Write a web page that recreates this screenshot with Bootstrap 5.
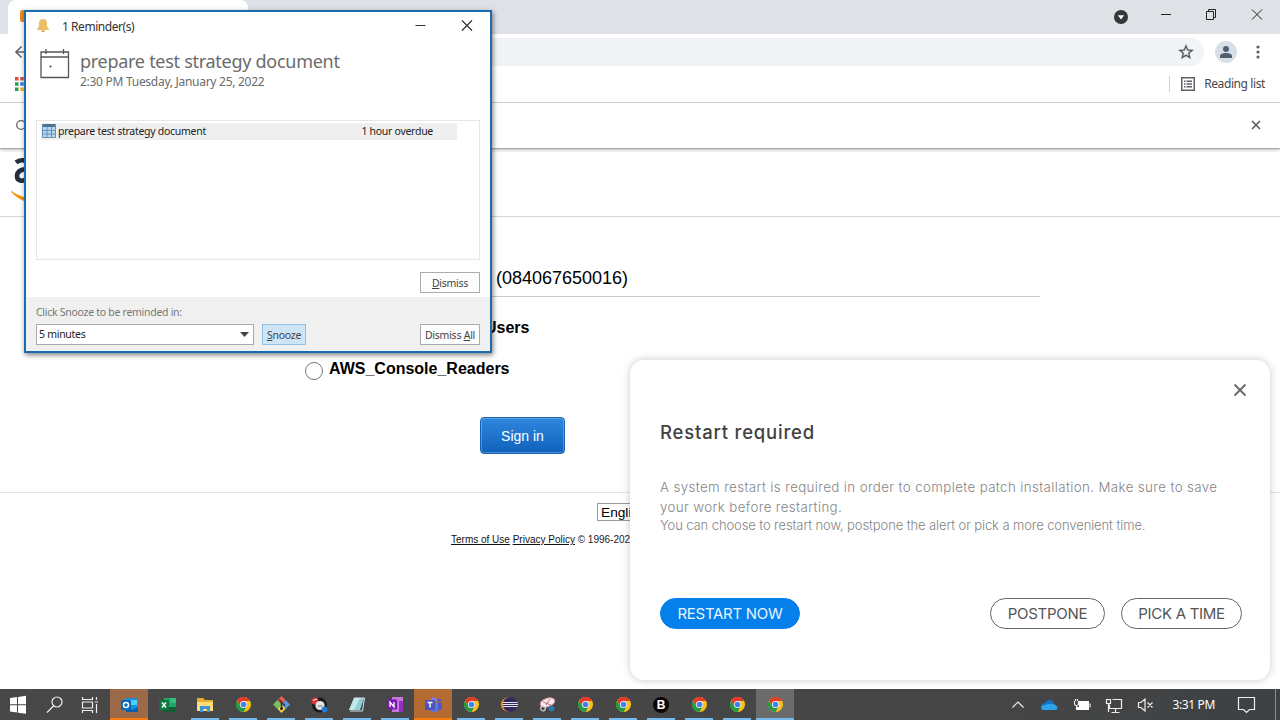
<!DOCTYPE html>
<html lang="en">
<head>
<meta charset="utf-8">
<meta name="viewport" content="width=device-width, initial-scale=1">
<title>Desktop</title>
<link href="https://cdn.jsdelivr.net/npm/bootstrap@5.3.0/dist/css/bootstrap.min.css" rel="stylesheet">
<style>
body{font-family:"Liberation Sans",Arial,sans-serif;color:#000;background:#fff;overflow:hidden}
svg{display:block;flex:none}
.desktop{width:1280px;height:720px}
.segoe{font-family:"Noto Sans","Open Sans",sans-serif}
.tabstrip{height:34px;background:#dee1e6;padding-left:8px}
.tab{width:240px;border-radius:8px 8px 0 0;background:#fff;padding:10px 12px}
.winctl{padding-right:16px}
.toolbar{height:34px;padding:4px 14px 2px 14px}
.omni{height:28px;margin-left:30px;background:#f1f3f4;border-radius:0 14px 14px 0;padding-right:9px}
.avatar{width:22px;height:22px;background:#d9dfe7;margin:0 19px 0 11px}
.menu-dots{margin-right:6px}
.bookmarks{height:35px;border-bottom:1px solid #d3d3d5;padding:0 15px 2px}
.reading{font-size:12px;color:#46484c;letter-spacing:-.4px}
.vr-line{width:1px;height:16px;background:#d2d4d8}
.infobar{height:46px;border-bottom:1px solid #a9a9a9;box-shadow:0 1px 3px rgba(0,0,0,.28);padding:0 19px 1px 16px}
.aws-head{height:68px;border-bottom:1px solid #d5d5d5;padding:3px 0 0 10px}
.aws-form{width:800px;margin-left:240px;padding-top:50px}
.account{height:30px;border-bottom:1px solid #ccc;font-size:18px;line-height:22px;padding-left:256px}
.role{font-size:16px;font-weight:700;line-height:20px}
.role-a{margin:21px 0 0 245px}
.role-b{margin:20px 0 0 65px}
.radio-dot{width:18px;height:18px;border:1px solid #767676;border-radius:50%;background:#fff;margin:4px 6px 0 0}
.signin{width:85px;height:37px;font-size:14px;line-height:36px;color:#fff;border:1px solid #1562b2;border-radius:4px;background:linear-gradient(#2f86dd,#1062bd);box-shadow:inset 0 0 0 1px rgba(255,255,255,.25);margin:37px 0 0 240px;padding:0}
.aws-foot{border-top:1px solid #e3e3e3;margin-top:38px;padding-top:10px}
.lang{width:76px;height:18px;border:1px solid #999;font-size:13.7px;line-height:17px;padding-left:3px;margin-left:597px}
.legal{font-size:10px;line-height:12px;margin:13px 0 0 451px;color:#222}
.legal a{color:#111}
.taskbar{height:31px;background:linear-gradient(90deg,#484848,#454545 80%,#3d4144)}
.app{width:38px;border-bottom:2px solid transparent;position:relative;padding-top:2px}
.app.open::after{content:"";position:absolute;left:5px;right:5px;bottom:-2px;height:2px;background:#76b9ed}
.app.alert-on{background:#9c6a48;border-bottom-color:#ff7a0a}
.app.teams{background:#b46b32}
.app.current{background:#6b6b6b}
.app.current::after{left:0;right:0}
.clock{color:#fff;font-size:12px;letter-spacing:-.35px}
.edge{width:5px;border-left:1px solid #8b8d8f}
.reminder{position:absolute;left:24px;top:10px;width:468px;height:343px;border:2px solid #1a6cb1;box-shadow:1px 2px 5px rgba(0,0,0,.5);background:#fff;color:#222;letter-spacing:-.28px}
.rem-title{height:29px;font-size:12px;line-height:29px;color:#333;padding-left:11px;letter-spacing:-.45px}
.rem-head{height:76px;padding:8px 0 0 14px;color:#6b6b6b}
.rem-subject{font-size:18px;line-height:22px}
.rem-when{font-size:12px;line-height:19px}
.rem-list{height:140px;margin:3px 10px 0;border:1px solid #e6e6e6;padding:2px 22px 0 4px;font-size:10.5px}
.rem-row{height:17px;background:#efefef}
.rbtn{width:60px;height:21px;border:1px solid #ababab;background:#fdfdfd;font-size:10.5px;line-height:20px;color:#444;padding:0;border-radius:0;letter-spacing:-.25px}
.rbtn u{text-underline-offset:1px}
.rem-foot{height:54px;background:#f0f0f0;padding:6px 10px 0;font-size:10.5px;color:#777}
.snz{width:218px;height:21px;border:1px solid #ababab;background:#fff;color:#222;padding:0 4px 0 2px}
.rbtn.blue{width:44px;background:#cde6f7;border-color:#92c0e0;margin-left:8px}
.restart{position:absolute;left:630px;top:360px;width:640px;height:320px;border-radius:14px;background:#fff;box-shadow:0 0 8px rgba(0,0,0,.22);font-family:Inter,sans-serif;padding:23px 28px 0 30px}
.restart-h{font-size:18.5px;line-height:24px;color:#414141;font-weight:500;margin-top:23px;letter-spacing:.8px}
.restart-p{font-size:13.3px;line-height:20px;color:#858585;margin-top:33px;font-weight:300;letter-spacing:.38px}
.restart-p.tight{font-size:13px;margin-top:-2px;letter-spacing:-.1px}
.pill{height:31px;border:1.5px solid #666;border-radius:16px;font-size:15px;color:#555;padding:0;line-height:29px;font-weight:400;letter-spacing:-.28px}
.pill.now{background:#0580ea;border-color:#0580ea;color:#e8f4ff;width:140px}
</style>
</head>
<body>
<svg width="0" height="0" class="position-absolute">
<symbol id="chrome" viewBox="0 0 16 16"><circle cx="8" cy="8" r="8" fill="#fbc116"/><path d="M8 4.300h7.100A8 8 0 0 0 1.070 4l3.800 6z" fill="#e33b2e"/><path d="M1.070 4A8 8 0 0 0 8 16l3.300-6L8 11.600 4.800 10z" fill="#229a48"/><circle cx="8" cy="8" r="3.800" fill="#fff"/><circle cx="8" cy="8" r="3" fill="#3f82ee"/></symbol>
</svg>
<div class="desktop position-relative d-flex flex-column overflow-hidden">
<main class="flex-grow-1 overflow-hidden">
 <header>
  <div class="tabstrip d-flex justify-content-between">
   <div class="tab"><svg width="12" height="12"><rect width="12" height="12" rx="2" fill="#f08a1d"/></svg></div>
   <div class="winctl d-flex align-items-start">
    <svg width="150" height="34" viewBox="1114 0 150 34"><circle cx="1121" cy="17" r="7" fill="#35363a"/><path d="M1117.800 15.200h6.400L1121 19.400z" fill="#fff"/><g fill="none" stroke="#222"><path d="M1161 14.500h10M1206.500 11.500h7v8h-7zM1208.500 11v-1.500h7v8H1214M1252 9.500l10 10M1262 9.500l-10 10"/></g></svg>
   </div>
  </div>
  <div class="toolbar d-flex align-items-center">
   <svg width="14" height="14" viewBox="0 0 14 14" fill="none" stroke="#5f6368" stroke-width="1.600"><path d="M14 7H2M7.500 1.500 2 7l5.500 5.500"/></svg>
   <div class="omni flex-grow-1 d-flex align-items-center justify-content-end"><svg width="18" height="18" viewBox="0 0 24 24"><path fill="#55585c" stroke="#55585c" stroke-width=".4" d="m22 9.240-7.190-.62L12 2 9.190 8.630 2 9.240l5.460 4.730L5.820 21 12 17.270 18.180 21l-1.630-7.030L22 9.240zM12 15.400l-3.760 2.270 1-4.280-3.320-2.880 4.380-.38L12 6.100l1.710 4.040 4.380.38-3.320 2.880 1 4.280L12 15.400z"/></svg></div>
   <div class="avatar rounded-circle d-flex align-items-center justify-content-center"><svg width="12" height="12" viewBox="0 0 12 12" fill="#4c6072"><circle cx="6" cy="3" r="3"/><path d="M0 12v-2c0-2 3-3 6-3s6 1 6 3v2z"/></svg></div>
   <svg width="4" height="14" fill="#5f6368" class="menu-dots"><circle cx="2" cy="2" r="1.600"/><circle cx="2" cy="7" r="1.600"/><circle cx="2" cy="12" r="1.600"/></svg>
  </div>
  <div class="bookmarks d-flex justify-content-between align-items-center">
   <svg width="14" height="14" viewBox="0 0 14 14"><path fill="#df4b3e" d="M0 0h3.500v3.500H0zM5.200 0h3.500v3.500H5.200zM10.400 0h3.500v3.500h-3.500z"/><path fill="#2b9b58" d="M0 5.200h3.500v3.500H0zM0 10.400h3.500v3.500H0z"/><path fill="#3c7de0" d="M5.200 5.200h3.500v3.500H5.200z"/><path fill="#efb320" d="M5.200 10.400h3.500v3.500H5.200zM10.400 5.200h3.500v3.500h-3.500zM10.400 10.400h3.500v3.500h-3.500z"/></svg>
   <div class="d-flex align-items-center">
    <span class="vr-line"></span>
    <svg class="ms-1 me-2" width="22" height="14" viewBox="-7 0 22 14" fill="none" stroke="#5f6368"><path stroke-width="1.500" d="M.75.75h12.500v12.500H.75z"/><path stroke-width="1.400" d="M3 4.200h1.500M3 7h1.500M3 9.800h1.500M5.500 4.200H11M5.500 7H11M5.500 9.800H11"/></svg>
    <span class="segoe reading">Reading list</span>
   </div>
  </div>
  <div class="infobar d-flex justify-content-between align-items-center position-relative">
   <svg width="10" height="10" fill="none" stroke="#666" stroke-width="1.300"><circle cx="5" cy="5" r="4.300"/></svg>
   <svg width="10" height="10" fill="none" stroke="#606060" stroke-width="1.700"><path d="m1 1 8 8M9 1 1 9"/></svg>
  </div>
 </header>
 <div class="aws-head"><svg width="40" height="52" viewBox="10 152 40 52"><path fill="none" stroke="#252f3e" stroke-width="4.600" d="M16 162.500c4-3.500 13-3.500 13 4v17M29 169c-8 0-12 2-12 7s6 7 12 1"/><path fill="#f79400" d="M11 190.500c5 4 10 6 20 8v4.500c-9-2-16-6-20-11.500z"/></svg></div>
 <div class="aws-form">
  <div class="account">(084067650016)</div>
  <div class="role role-a">Users</div>
  <div class="role role-b d-flex align-items-center"><span class="radio-dot"></span><span>AWS_Console_Readers</span></div>
  <button class="signin btn d-block">Sign in</button>
 </div>
 <footer class="aws-foot">
  <div class="lang">English</div>
  <div class="legal"><a href="#">Terms of Use</a> <a href="#">Privacy Policy</a> © 1996-202</div>
 </footer>
</main>

<nav class="taskbar d-flex align-items-stretch flex-shrink-0">
 <svg width="110" height="31" viewBox="0 689 110 31"><path fill="#fff" d="m10 698 7-1v7.300h-7zM18 696.900l8-1.100v8.500h-8zM10 705.300h7v7.300l-7-1zM18 705.300h8v8.500l-8-1.100z"/><g fill="none" stroke="#eee" stroke-width="1.200"><circle cx="57" cy="702" r="5"/><path d="m53.500 706-6.500 6.500M82.500 697v2.500h10V697M82.500 713v-2.500h10v2.500M82.500 702h10v6h-10zM96.500 697v3M96.500 704v9M95 702h3"/></g></svg>
 <div class="app alert-on d-flex align-items-center justify-content-center"><svg width="17" height="16" viewBox="0 0 17 16"><path fill="#1490df" d="M5 1h11v8l1 1v5H5z"/><path fill="#50d0f7" d="M10 3h6v5h-6z"/><path fill="#0a5ead" d="m5 9 6 4 6-3v5H5z"/><rect y="3" width="10" height="10" rx="1" fill="#0869bd"/><circle cx="5" cy="8" r="2.500" fill="none" stroke="#fff" stroke-width="1.500"/></svg></div>
 <div class="app d-flex align-items-center justify-content-center"><svg width="17" height="14" viewBox="0 0 17 14"><path fill="#1fa565" d="M5 0h12v14H5z"/><path fill="#35bd7d" d="M11 0h6v5h-6z"/><path fill="#125c38" d="M5 9h12v5H5z"/><rect y="2" width="10" height="10" rx="1" fill="#10763f"/><path d="m3 4.500 4 5M7 4.500l-4 5" stroke="#fff" stroke-width="1.500"/></svg></div>
 <div class="app open d-flex align-items-center justify-content-center"><svg width="16" height="14" viewBox="0 0 16 14"><path fill="#e9ad2f" d="M0 0h6l2 2h8v11H0z"/><path fill="#ffdc77" d="M0 4h16v9H0z"/><path fill="#3c96dc" d="M3 8h10v6h-3v-3H6v3H3z"/></svg></div>
 <div class="app open d-flex align-items-center justify-content-center"><svg width="15" height="15"><use href="#chrome"/></svg></div>
 <div class="app open d-flex align-items-center justify-content-center"><svg width="17" height="17" viewBox="0 0 17 17"><path fill="#e6604f" d="m8.500 0 4.200 4.200-4.200 4.300-4.200-4.300z"/><path fill="#75c45e" d="m4.200 4.200 4.300 4.300-4.300 4.200L0 8.500z"/><path fill="#5b9ade" d="M12.800 4.200 17 8.500l-4.200 4.200-4.300-4.200z"/><path fill="#f2cf4a" d="m8.500 8.500 4.200 4.200L8.500 17l-4.200-4.300z"/><path d="M6 3.500 8.500 6v7M8.500 6.500l3.500 3" stroke="#303030" stroke-width="1.400" fill="none"/><circle cx="8.500" cy="12.500" r="1.500" fill="#222"/></svg></div>
 <div class="app open d-flex align-items-center justify-content-center"><svg width="17" height="16" viewBox="0 0 17 16"><circle cx="8.500" cy="8" r="7.500" fill="#1b1b1d"/><circle cx="4" cy="4" r="3.600" fill="#d83434"/><path d="M2 3.500 6 2" stroke="#fff"/><circle cx="9" cy="8.500" r="4.600" fill="#e6e6e4"/><path d="M6.500 9h5" stroke="#999" stroke-width="1.500"/><circle cx="13.500" cy="12.500" r="3" fill="#2879d4"/></svg></div>
 <div class="app open d-flex align-items-center justify-content-center"><svg width="16" height="15" viewBox="0 0 16 15"><path fill="#8dd1d6" d="M5 1h10l-4 12H0z"/><path fill="#c3e7ea" d="M5 1h6L5 13H0z"/><path d="M5 1h10.500l-2 13H1" fill="none" stroke="#d8e6e8"/></svg></div>
 <div class="app open d-flex align-items-center justify-content-center"><svg width="16" height="15" viewBox="0 0 16 15"><path fill="#c975df" d="M5 0h11v15H5z"/><path fill="#9332bf" d="M12 4h4v11h-4z"/><rect y="2.500" width="10" height="10" rx="1" fill="#7719aa"/><path d="M3 10V5l4 5V5" stroke="#fff" stroke-width="1.300" fill="none"/></svg></div>
 <div class="app alert-on teams d-flex align-items-center justify-content-center"><svg width="17" height="16" viewBox="0 0 17 16"><circle cx="9" cy="3" r="2.700" fill="#7b83eb"/><circle cx="14.500" cy="3.500" r="1.800" fill="#5059c9"/><path fill="#6570d8" d="M5 6h8v7c-1 3-6 3-8 0z"/><path fill="#5059c9" d="M13 6h4v5c0 2-2 3-4 2z"/><rect y="3" width="10" height="10" rx="1" fill="#4b53bc"/><path d="M2.500 5.500h5M5 5.500v5" stroke="#fff" stroke-width="1.400"/></svg></div>
 <div class="app open d-flex align-items-center justify-content-center"><svg width="15" height="15"><use href="#chrome"/></svg></div>
 <div class="app open d-flex align-items-center justify-content-center"><svg width="17" height="15" viewBox="0 0 17 15"><circle cx="7" cy="7.500" r="7" fill="#ef9a2d"/><circle cx="9" cy="7.500" r="7.300" fill="#34295c"/><path d="M2 5.500h14.500M1.600 7.500H17M2 9.500h14.500" stroke="#e3e2ee" stroke-width="1.200"/></svg></div>
 <div class="app open d-flex align-items-center justify-content-center"><svg width="17" height="15" viewBox="0 0 17 15"><ellipse cx="8.500" cy="5.500" rx="7.500" ry="4.300" transform="rotate(-18 8.500 5.500)" fill="#f4eeee" stroke="#d98a92"/><path d="m7 8 4-6M4 5l8 3" stroke="#c64652" stroke-width=".8"/><circle cx="4" cy="11.500" r="2.300" fill="none" stroke="#d7d7d7" stroke-width="1.200"/><circle cx="12.500" cy="11.500" r="3" fill="#2a79ab"/></svg></div>
 <div class="app open d-flex align-items-center justify-content-center"><svg width="15" height="15"><use href="#chrome"/></svg></div>
 <div class="app open d-flex align-items-center justify-content-center"><svg width="15" height="15"><use href="#chrome"/></svg></div>
 <div class="app open d-flex align-items-center justify-content-center"><svg width="16" height="16"><circle cx="8" cy="8" r="8" fill="#080808"/><text x="8" y="12.300" text-anchor="middle" font-size="12" font-weight="700" fill="#fff">B</text></svg></div>
 <div class="app open d-flex align-items-center justify-content-center"><svg width="15" height="15"><use href="#chrome"/></svg></div>
 <div class="app open d-flex align-items-center justify-content-center"><svg width="15" height="15"><use href="#chrome"/></svg></div>
 <div class="app open current d-flex align-items-center justify-content-center"><svg width="15" height="15"><use href="#chrome"/></svg></div>
 <div class="ms-auto d-flex align-items-center">
  <svg width="162" height="31" viewBox="1010 689 162 31"><g fill="none" stroke="#eee" stroke-width="1.200"><path d="m1012.500 707.500 5.500-5.500 5.500 5.500"/><path d="M1109.500 704.500v4h12v-9h-9M1115.500 709v3M1111.500 712.500h8M1106.500 699.500h4v4h-4zM1108.500 703.500v8.500M1138.500 702.500h2.500l4-3.500v12l-4-3.500h-2.500zM1147.500 702.500l5 5M1152.500 702.500l-5 5"/><path d="M1074.500 701v3c0 2 4 2 4 0v-3M1075.500 699v2M1077.500 699v2M1076.500 706v4"/></g><path fill="#fff" d="M1079 701h10v9h-12v-3h2zM1089.500 703.500h1v4h-1z"/><path fill="#1272c4" d="M1041 707c0-4 4-4 4-4 3-5 9-3 9 1z"/><path fill="#2da5ec" d="M1043 710c-3-1-2-5 2-5 4-2 6 0 7-1 6 0 7 6 3 6z"/></svg>
  <span class="segoe clock">3:31 PM</span>
  <svg width="60" height="31" viewBox="1215 689 60 31" fill="none" stroke="#eee" stroke-width="1.200"><path d="M1238.500 697.500h16v12h-5l-3 3-3-3h-5z"/></svg>
  <span class="edge align-self-stretch"></span>
 </div>
</nav>

<section class="reminder segoe">
 <div class="rem-title d-flex">
  <svg width="12" height="14" viewBox="0 0 12 14" style="margin-top:7px"><path fill="#eebd68" d="M6 0c4 0 4 3 4 6s2 3 2 5H0c0-2 2-2 2-5S2 0 6 0z"/><path fill="#d59c45" d="M4 11.500h4c0 2-4 2-4 0z"/></svg>
  <span style="margin-left:13px">1 Reminder(s)</span>
  <svg class="ms-auto" width="75" height="28" viewBox="415 12 75 28" fill="none" stroke="#333" stroke-width="1.200"><path d="M415.500 25.500h10M462 20.500l10 10M472 20.500l-10 10"/></svg>
 </div>
 <div class="rem-head d-flex">
  <svg width="30" height="31" viewBox="0 0 30 31" fill="none" stroke="#555" stroke-width="1.300"><path d="M1 3h27.500v25.500H1zM1 8h27.500M6 0v5M23.500 0v5"/><circle cx="10.500" cy="17.500" r="1" fill="#444" stroke="none"/></svg>
  <div style="margin:1px 0 0 10px"><div class="rem-subject">prepare test strategy document</div><div class="rem-when">2:30 PM Tuesday, January 25, 2022</div></div>
 </div>
 <div class="rem-list">
  <div class="rem-row d-flex align-items-center">
   <svg width="14" height="14" viewBox="0 0 14 14" style="margin:-1px 0 0 1px"><path fill="#b9d8f0" d="M.5.5h13v13H.5z"/><path fill="#4d7296" d="M0 0h14v3H0z"/><path d="M.5 0v13.500h13V0M5 3v10M9.500 3v10M0 6.500h14M0 10h14" fill="none" stroke="#6393bc"/></svg>
   <span style="margin-left:2px">prepare test strategy document</span>
   <span class="ms-auto" style="margin-right:24px">1 hour overdue</span>
  </div>
 </div>
 <div class="d-flex justify-content-end" style="padding:12px 10px 4px"><button class="btn rbtn"><u>D</u>ismiss</button></div>
 <div class="rem-foot">
  <div style="line-height:18px">Click Snooze to be reminded in:</div>
  <div class="d-flex" style="margin-top:3px">
   <div class="snz d-flex align-items-center justify-content-between"><span>5 minutes</span><svg width="9" height="6"><path fill="#444" d="M0 0h9L4.500 5z"/></svg></div>
   <button class="btn rbtn blue"><u>S</u>nooze</button>
   <button class="btn rbtn ms-auto">Dismiss <u>A</u>ll</button>
  </div>
 </div>
</section>

<section class="restart">
 <div class="d-flex justify-content-end"><svg width="14" height="14" fill="none" stroke="#666" stroke-width="1.800" style="margin-right:-5px"><path d="m1.500 1.500 11 11M12.500 1.500l-11 11"/></svg></div>
 <div class="restart-h">Restart required</div>
 <div class="restart-p">A system restart is required in order to complete patch installation. Make sure to save<br>your work before restarting.</div>
 <div class="restart-p tight">You can choose to restart now, postpone the alert or pick a more convenient time.</div>
 <div class="d-flex" style="margin-top:63px"><button class="btn pill now">RESTART NOW</button><button class="btn pill ms-auto" style="width:115px">POSTPONE</button><button class="btn pill" style="width:121px;margin-left:16px">PICK A TIME</button></div>
</section>
</div>
<script src="https://cdn.jsdelivr.net/npm/bootstrap@5.3.0/dist/js/bootstrap.bundle.min.js"></script>
</body>
</html>
